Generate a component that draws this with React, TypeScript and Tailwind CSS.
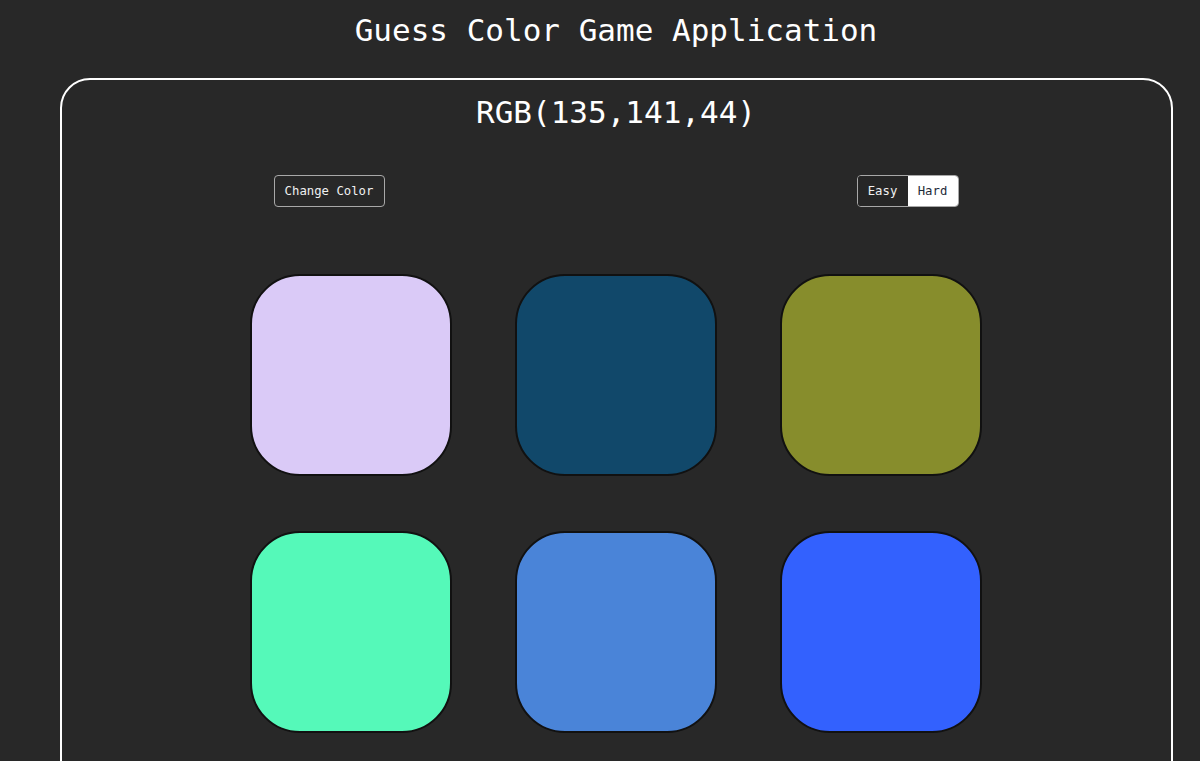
import React from "react";

const colors = ["#dacaf7", "#11486a", "#878d2c", "#55f9b9", "#4a84d8", "#3361fe"];

export default function App() {
  return (
    <div className="w-[1200px] h-[761px] overflow-hidden bg-[#282828] text-white" style={{ fontFamily: '"DejaVu Sans Mono", monospace' }}>
      <div className="w-[1232px] flex flex-col items-center">
        <h1 className="pt-[12px] text-[31px] leading-[37px] text-white">Guess Color Game Application</h1>
        <div className="mt-[29px] w-[1113px] h-[720px] border-2 border-white rounded-[30px] flex flex-col">
          <div className="pt-[14px] text-center text-[31px] leading-[37px]">RGB(135,141,44)</div>
          <div className="mt-[44px] px-[212px] flex justify-between items-center">
            <button className="h-[32px] w-[111px] border border-[#a8a8a8] rounded-[4px] text-[12.3px] text-[#f0f0f0] bg-transparent">Change Color</button>
            <div className="h-[32px] w-[102px] flex border border-[#a8a8a8] rounded-[4px] overflow-hidden text-[12.3px]">
              <div className="w-[50px] flex items-center justify-center bg-[#262626] text-[#f0f0f0]">Easy</div>
              <div className="flex-1 flex items-center justify-center bg-white text-[#1e2a3a]">Hard</div>
            </div>
          </div>
          <div className="mt-[67px] mx-auto grid grid-cols-[202px_202px_202px] gap-x-[63px] gap-y-[55px]">
            {colors.map((c) => (
              <div key={c} className="w-[202px] h-[202px] rounded-[50px] border-2 border-[#111]" style={{ backgroundColor: c }} />
            ))}
          </div>
        </div>
      </div>
    </div>
  );
}
